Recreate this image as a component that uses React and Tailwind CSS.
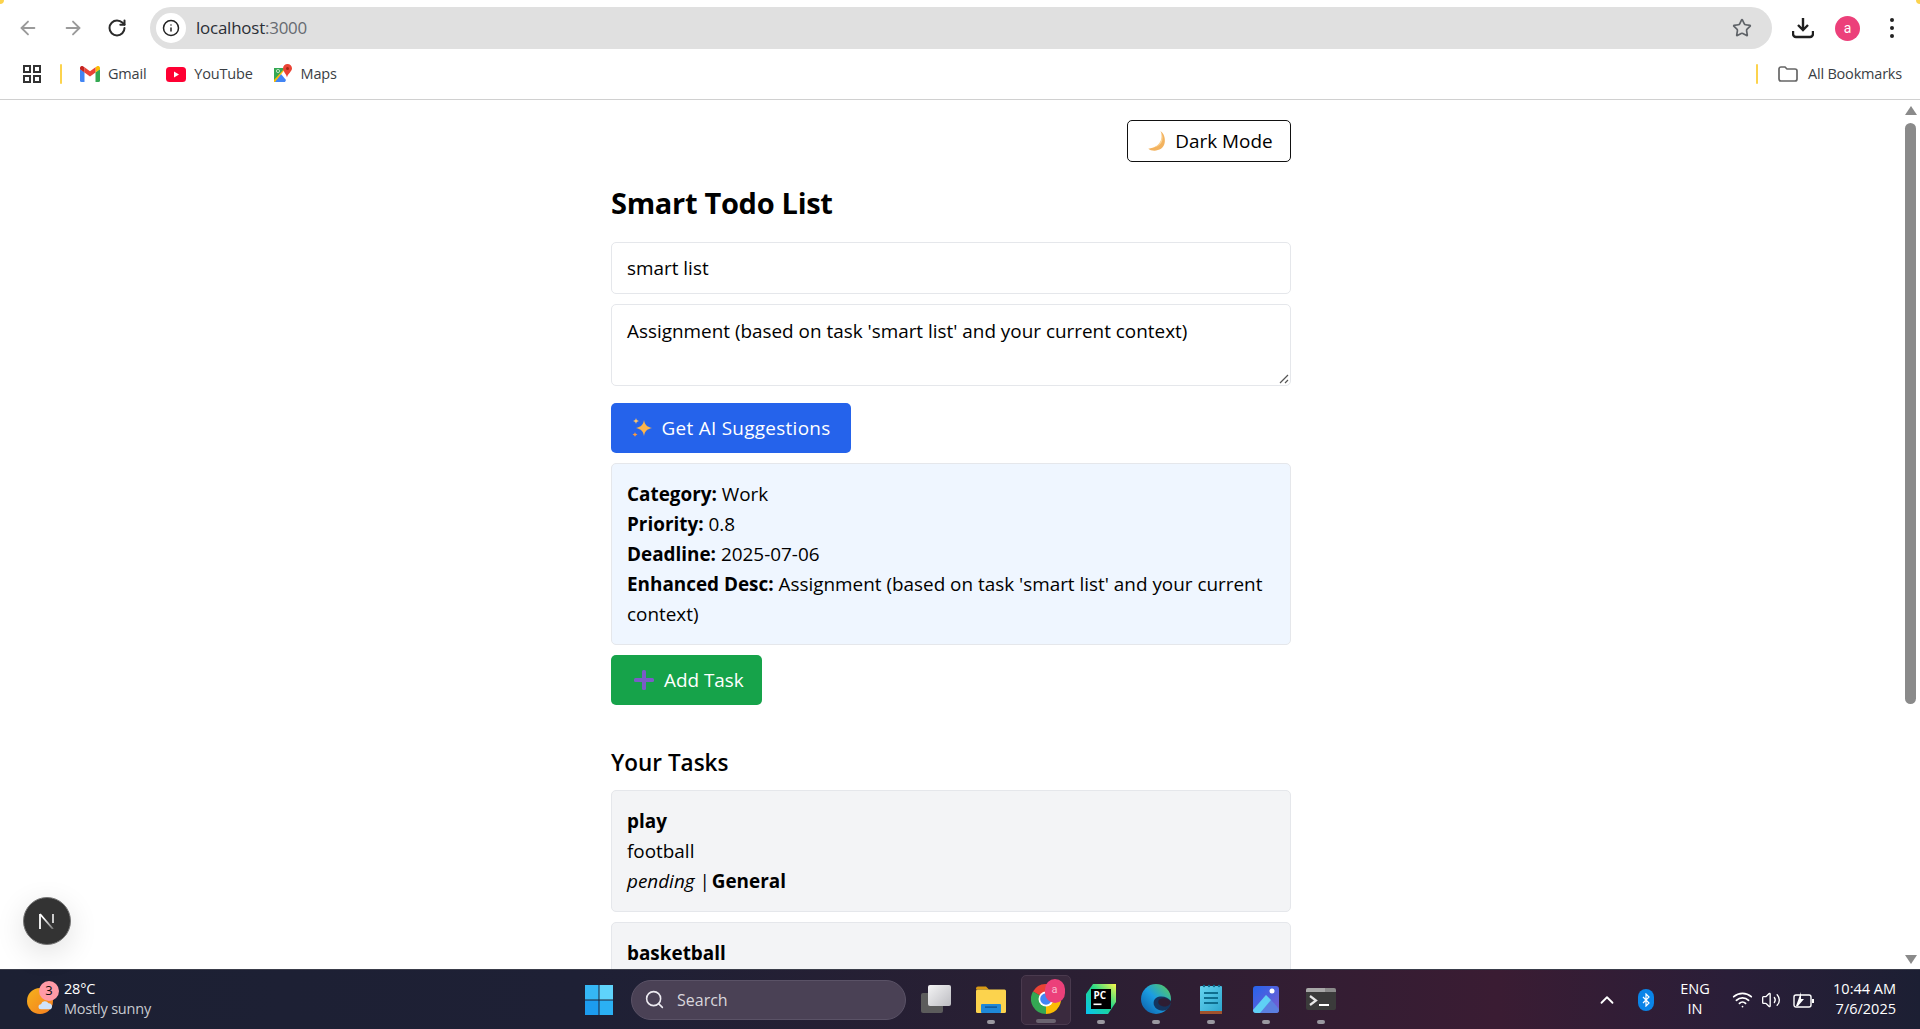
import React from "react";
import { ArrowLeft, ArrowRight, RotateCw, Star, Search, Info, ChevronUp, Volume2, Wifi } from "lucide-react";

const sans = "font-['Open_Sans','Noto_Sans',sans-serif]";

function GmailIcon() {
  return (
    <svg width="20" height="16" viewBox="0 0 20 16">
      <path d="M1.5 16A1.5 1.5 0 0 1 0 14.5V3l4.5 3.3V16z" fill="#4285f4" />
      <path d="M15.5 16V6.3L20 3v11.5a1.5 1.5 0 0 1-1.5 1.5z" fill="#34a853" />
      <path d="M15.5 1.2V6.500L20 3.200V2c0-1.700-2-2.700-3.300-1.600z" fill="#fbbc04" />
      <path d="M4.500 6.500V1.200L10 5.300l5.500-4.100v5.300L10 10.500z" fill="#ea4335" />
      <path d="M0 2v1.200L4.500 6.500V1.200L3.300.4C2 -.7 0 .3 0 2z" fill="#c5221f" />
    </svg>
  );
}

function YouTubeIcon() {
  return (
    <svg width="20" height="15" viewBox="0 0 20 15">
      <rect width="20" height="15" rx="3.500" fill="#ff0033" />
      <path d="M8 4.500v6l5-3z" fill="#fff" />
    </svg>
  );
}

function MapsIcon() {
  return (
    <svg width="20" height="20" viewBox="0 0 20 20">
      <path d="M1 4h11L1 18z" fill="#34a853" />
      <path d="M1 18 8 10l5 6-1 2H2z" fill="#4285f4" />
      <path d="M1 16 12 4h1L2 18H1z" fill="#fbbc04" />
      <circle cx="5" cy="7" r="1.600" fill="none" stroke="#d7efd8" strokeWidth="0.800" />
      <path d="M14.500 0a4.500 4.500 0 0 0-4.500 4.500c0 3 3.200 5 4 9 .8-4 5-6 5-9A4.500 4.500 0 0 0 14.500 0z" fill="#ea4335" />
      <circle cx="14.500" cy="4.500" r="1.500" fill="#a52714" />
    </svg>
  );
}

function Bookmark({ icon, label, className }) {
  return (
    <div className={"flex items-center gap-[8px] " + (className || "")}>
      {icon}
      <span className={sans + " text-[14.500px] tracking-[-0.2px] text-[#3a3e44]"}>{label}</span>
    </div>
  );
}

function ChromeBars() {
  return (
    <div className="relative h-[100px] shrink-0 bg-white border-b border-[#d0d0d0]">
      <div className="absolute left-0 top-0 w-[4px] h-[4px] rounded-br-full bg-[#fcd34d]" />
      <div className="absolute right-0 top-0 w-[4px] h-[4px] rounded-bl-full bg-[#fcd34d]" />
      <div className="flex items-center h-[56px] pl-[17px]">
        <ArrowLeft size={22} strokeWidth={2} className="text-[#9a9a9a]" />
        <ArrowRight size={22} strokeWidth={2} className="text-[#9a9a9a] ml-[23px]" />
        <RotateCw size={20} strokeWidth={2.400} className="text-[#2a2a2a] ml-[23px]" />
        <div className="ml-[23px] w-[1622px] h-[42px] rounded-full bg-[#e0e0e0] flex items-center pl-[6px] pr-[20px]">
          <div className="w-[30px] h-[30px] rounded-full bg-white flex items-center justify-center">
            <Info size={18} strokeWidth={2} className="text-[#222]" />
          </div>
          <span className={sans + " ml-[10px] text-[16.900px] tracking-[-0.2px] text-[#2b2f36]"}>
            localhost<span className="text-[#666a70]">:3000</span>
          </span>
          <Star size={20} strokeWidth={2} className="ml-auto text-[#5f6368]" />
        </div>
        <svg width="22" height="22" viewBox="0 0 22 22" className="ml-[20px]">
          <path d="M11 1v12M6 8l5 5 5-5M1 14v3a3 3 0 0 0 3 3h14a3 3 0 0 0 3-3v-3" fill="none" stroke="#1f1f1f" strokeWidth="2.400" />
        </svg>
        <div className="ml-[21px] w-[25px] h-[25px] rounded-full bg-[#ec407a] flex items-center justify-center text-white text-[14px] font-['Roboto']">a</div>
        <div className="ml-[30px] flex flex-col gap-[4px]">
          <span className="w-[4px] h-[4px] rounded-full bg-[#222]" />
          <span className="w-[4px] h-[4px] rounded-full bg-[#222]" />
          <span className="w-[4px] h-[4px] rounded-full bg-[#222]" />
        </div>
      </div>
      <div className="flex items-center h-[36px] pl-[23px] pr-[18px]">
        <svg width="18" height="18" viewBox="0 0 18 18" fill="none" stroke="#333" strokeWidth="2">
          <rect x="1" y="1" width="6" height="6" />
          <rect x="11" y="1" width="6" height="6" />
          <rect x="1" y="11" width="6" height="6" />
          <rect x="11" y="11" width="6" height="6" />
        </svg>
        <div className="ml-[19px] w-[2px] h-[20px] rounded-full bg-[#fcd34d]" />
        <Bookmark className="ml-[18px]" icon={<GmailIcon />} label="Gmail" />
        <Bookmark className="ml-[20px]" icon={<YouTubeIcon />} label="YouTube" />
        <Bookmark className="ml-[20px]" icon={<MapsIcon />} label="Maps" />
        <div className="ml-auto w-[2px] h-[20px] rounded-full bg-[#fcd34d]" />
        <svg width="20" height="16" viewBox="0 0 20 16" fill="none" stroke="#666" strokeWidth="1.700" className="ml-[20px]">
          <path d="M1 3a2 2 0 0 1 2-2h4l2 2h8a2 2 0 0 1 2 2v8a2 2 0 0 1-2 2H3a2 2 0 0 1-2-2z" />
        </svg>
        <span className={sans + " ml-[10px] text-[14.500px] tracking-[-0.2px] text-[#3a3e44]"}>All Bookmarks</span>
      </div>
    </div>
  );
}

function Moon() {
  return (
    <svg width="22" height="22" viewBox="0 0 20 20">
      <path d="M14 1c3 5 1 15-11 16 3 3 14 3 15-6 .5-4-1-8-4-10z" fill="#f3b35f" />
      <path d="M14 1c3 5 1 15-11 16 5-1 13-2 13-10 0-2-1-4-2-6z" fill="#fcd79b" />
    </svg>
  );
}

function Sparkles() {
  return (
    <svg width="22" height="22" viewBox="0 0 22 22">
      <path d="M13 3c1 5 2.500 6.500 8 8-5.500 1.500-7 3-8 8-1-5-2.500-6.500-8-8 5.500-1.500 7-3 8-8z" fill="#fdb44b" />
      <path d="M5 1c.5 2 1 2.500 3 3-2 .5-2.500 1-3 3-.5-2-1-2.500-3-3 2-.5 2.500-1 3-3z" fill="#fcc46b" />
      <path d="M4 15c.4 1.500.8 2 2.500 2.500-1.700.5-2.100 1-2.500 2.500-.4-1.500-.8-2-2.500-2.500 1.700-.5 2.100-1 2.500-2.500z" fill="#fd9a3c" />
    </svg>
  );
}

function Plus() {
  return (
    <svg width="20" height="20" viewBox="0 0 20 20">
      <rect x="8" y="0" width="4" height="20" rx="1.500" fill="#7a5cc6" />
      <rect x="0" y="8" width="20" height="4" rx="1.500" fill="#7a5cc6" />
    </svg>
  );
}

function TaskCard({ title, desc, status, category }) {
  return (
    <div className="shrink-0 rounded-[5px] border border-[#e5e7eb] bg-[#f3f4f6] p-[15px]">
      <div className="font-bold">{title}</div>
      <div>{desc}</div>
      <div>
        <em className="italic">{status}</em> | <strong className="-ml-[3px]">{category}</strong>
      </div>
    </div>
  );
}

function MainPage() {
  return (
    <div className="flex-1 flex min-h-0 bg-white">
      <div className={sans + " flex-1 min-w-0 overflow-hidden"}>
        <div className="w-[680px] ml-[611px] flex flex-col text-black text-[18.900px] leading-[30px]">
          <button className="self-end mt-[20px] h-[42px] w-[164px] rounded-[5px] border border-[#111] bg-white flex items-center justify-center gap-[8px]">
            <Moon />
            <span>Dark Mode</span>
          </button>
          <h1 className="mt-[21px] text-[29px] leading-[40px] font-bold tracking-[-0.3px]">Smart Todo List</h1>
          <div className="mt-[19px] h-[52px] rounded-[5px] border border-[#e5e7eb] bg-white flex items-center px-[15px]">smart list</div>
          <div className="relative mt-[10px] h-[82px] rounded-[5px] border border-[#e5e7eb] bg-white px-[15px] py-[11px]">
            Assignment (based on task 'smart list' and your current context)
            <svg width="10" height="10" viewBox="0 0 10 10" className="absolute right-[1px] bottom-[1px]" stroke="#555" strokeWidth="1.200">
              <path d="M1 9 9 1M6 9l3-3" />
            </svg>
          </div>
          <button className="mt-[17px] self-start h-[50px] w-[240px] rounded-[5px] bg-[#2563eb] text-white flex items-center justify-center gap-[8px]">
            <Sparkles />
            <span className="tracking-[0.3px]">Get AI Suggestions</span>
          </button>
          <div className="mt-[10px] rounded-[5px] border border-[#e5e7eb] bg-[#eff6ff] px-[15px] py-[15px]">
            <div><strong>Category:</strong> Work</div>
            <div><strong>Priority:</strong> 0.8</div>
            <div><strong>Deadline:</strong> 2025-07-06</div>
            <div><strong>Enhanced Desc:</strong> Assignment (based on task 'smart list' and your current context)</div>
          </div>
          <button className="mt-[10px] self-start h-[50px] w-[151px] rounded-[5px] bg-[#16a34a] text-white flex items-center pl-[23px] gap-[10px]">
            <Plus />
            <span>Add Task</span>
          </button>
          <h2 className="mt-[40px] text-[22.500px] leading-[35px] font-semibold">Your Tasks</h2>
          <div className="mt-[10px] flex flex-col gap-[10px]">
            <TaskCard title="play" desc="football" status="pending" category="General" />
            <TaskCard title="basketball" desc="court" status="pending" category="General" />
          </div>
        </div>
      </div>
      <div className="w-[15px] shrink-0 bg-white flex flex-col items-center pt-[6px] pb-[5px] pr-[4px]">
        <div className="w-0 h-0 border-x-[6px] border-x-transparent border-b-[9px] border-b-[#8a8a8a]" />
        <div className="mt-[8px] w-[11px] h-[581px] rounded-full bg-[#8a8a8a]" />
        <div className="mt-auto w-0 h-0 border-x-[6px] border-x-transparent border-t-[9px] border-t-[#8a8a8a]" />
      </div>
    </div>
  );
}

function TaskIcon({ children, dot = true, active = false, badge }) {
  return (
    <div className={"relative w-[50px] h-[50px] flex items-center justify-center rounded-[5px] mx-[2.500px] " + (active ? "bg-[#3a2a3e] border border-[#4a3a4e]" : "")}>
      <div className="-mt-[1px] flex">{children}</div>
      {badge}
      {dot && <span className={"absolute bottom-[1px] left-1/2 -translate-x-1/2 h-[4px] rounded-full " + (active ? "w-[20px] bg-[#6b6470]" : "w-[8px] bg-[#9a98a0]")} />}
    </div>
  );
}

function Taskbar() {
  return (
    <div className="relative h-[60px] shrink-0 flex items-center bg-[linear-gradient(90deg,#1c2033_0%,#1e2035_30%,#2a1f33_55%,#3a1c33_78%,#2a1e38_90%,#1c1f33_100%)] border-t border-[#3a3d4a] text-white">
      <div className="flex items-center pl-[27px] w-[585px] shrink-0">
        <div className="relative w-[26px] h-[26px] mt-[2px]">
          <div className="absolute left-0 top-0 w-[26px] h-[26px] rounded-full bg-[linear-gradient(135deg,#f5b31c,#f57c20)]" />
          <svg width="18" height="10" viewBox="0 0 20 12" className="absolute left-[10px] top-[12px]">
            <path d="M4 11a3 3 0 0 1 0-6 5 5 0 0 1 9-1 4 4 0 0 1 3 7z" fill="#cfe3fa" />
          </svg>
          <div className="absolute left-[12px] -top-[7px] w-[20px] h-[20px] rounded-full bg-[#ff9aa6] text-[#111] text-[13px] font-['Noto_Sans'] flex items-center justify-center">3</div>
        </div>
        <div className={sans + " ml-[11px] -mt-[2px] flex flex-col text-[14.500px] leading-[20px] tracking-[-0.2px]"}>
          <span>28°C</span>
          <span className="text-[#c8cad0]">Mostly sunny</span>
        </div>
      </div>
      <svg width="28" height="30" viewBox="0 0 28 30">
        <rect x="0" y="0" width="13.500" height="14.500" fill="#35b7f5" />
        <rect x="14.500" y="0" width="13.500" height="14.500" fill="#5fd3fb" />
        <rect x="0" y="15.500" width="13.500" height="14.500" fill="#1c9cef" />
        <rect x="14.500" y="15.500" width="13.500" height="14.500" fill="#2bb0f3" />
      </svg>
      <div className="ml-[18px] w-[275px] h-[40px] rounded-full bg-[#4a4155] border border-[#5a5266] flex items-center pl-[12px] gap-[12px]">
        <Search size={21} strokeWidth={1.800} className="text-[#eceaf0]" />
        <span className={sans + " text-[16px] text-[#d8d6dc]"}>Search</span>
      </div>
      <div className="ml-[2px] flex items-center">
        <TaskIcon dot={false}>
          <div className="relative w-[30px] h-[28px]">
            <div className="absolute left-0 bottom-0 w-[22px] h-[20px] rounded-[2px] bg-[#5c5c5c]" />
            <div className="absolute right-0 top-0 w-[23px] h-[21px] rounded-[2px] bg-[linear-gradient(135deg,#f4f4f5,#bdbdc2)]" />
          </div>
        </TaskIcon>
        <TaskIcon>
          <svg width="30" height="27" viewBox="0 0 30 27">
            <path d="M0 2.500a2 2 0 0 1 2-2h8l3 3h-13z" fill="#d99a14" />
            <rect y="3.500" width="30" height="23.500" rx="1.500" fill="#fcd34d" />
            <rect x="5" y="18" width="20" height="9" rx="1" fill="#1e88d8" />
            <rect x="9" y="20.500" width="12" height="1.200" fill="#0b4a86" />
          </svg>
        </TaskIcon>
        <TaskIcon active badge={<div className="absolute right-[5px] top-[3px] w-[20px] h-[24px] rounded-full bg-[#ec407a] text-[#f8bbd0] text-[11px] font-['Roboto'] flex items-center justify-center">a</div>}>
          <svg width="30" height="30" viewBox="0 0 30 30">
            <path d="M15 15 28 7.500A15 15 0 0 0 2 7.500z" fill="#ea4335" />
            <path d="M15 15 2 7.500A15 15 0 0 0 15 30z" fill="#34a853" />
            <path d="M15 15 15 30A15 15 0 0 0 28 7.500z" fill="#fbbc04" />
            <circle cx="15" cy="15" r="7.500" fill="#fff" />
            <circle cx="15" cy="15" r="5.800" fill="#4285f4" />
          </svg>
        </TaskIcon>
        <TaskIcon>
          <svg width="30" height="30" viewBox="0 0 30 30">
            <defs>
              <linearGradient id="pcGrad" x1="0" y1="1" x2="1" y2="0">
                <stop offset="0" stopColor="#07c3f2" />
                <stop offset="0.550" stopColor="#21d789" />
                <stop offset="1" stopColor="#fcf84a" />
              </linearGradient>
            </defs>
            <path d="M7 0h23v18l-8 12H0V10z" fill="url(#pcGrad)" />
            <rect x="5" y="5" width="20" height="20" fill="#000" />
            <text x="7.500" y="15" fill="#fff" fontSize="10" fontWeight="700" fontFamily="Open Sans, sans-serif">PC</text>
            <rect x="7.500" y="19.500" width="8" height="1.600" fill="#fff" />
          </svg>
        </TaskIcon>
        <TaskIcon>
          <svg width="30" height="30" viewBox="0 0 30 30">
            <defs>
              <linearGradient id="edgeGrad" x1="0" y1="1" x2="1" y2="0">
                <stop offset="0" stopColor="#0c59a4" />
                <stop offset="0.500" stopColor="#1b9de2" />
                <stop offset="1" stopColor="#5ed04e" />
              </linearGradient>
            </defs>
            <circle cx="15" cy="15" r="15" fill="url(#edgeGrad)" />
            <path d="M30 17c-3-4-10-6-15-3-4 3-3 10 3 12 3 1 6 1 9-1 2-2 3-5 3-8z" fill="#14355f" />
            <path d="M30 18c-2-3-7-5-11-3-3 2-2 6 2 7 3 1 5 .5 7-1 1-1 2-2 2-3z" fill="#2e1d33" />
          </svg>
        </TaskIcon>
        <TaskIcon>
          <svg width="22" height="30" viewBox="0 0 22 30">
            <defs>
              <linearGradient id="noteGrad" x1="0" y1="0" x2="1" y2="1">
                <stop offset="0" stopColor="#66d4f0" />
                <stop offset="1" stopColor="#2aa3cc" />
              </linearGradient>
            </defs>
            <rect y="2" width="22" height="28" rx="1" fill="url(#noteGrad)" />
            <rect y="27" width="22" height="3" fill="#a0522d" />
            <circle cx="4" cy="2" r="1.200" fill="#0f6e8f" />
            <circle cx="9" cy="2" r="1.200" fill="#0f6e8f" />
            <circle cx="14" cy="2" r="1.200" fill="#0f6e8f" />
            <circle cx="19" cy="2" r="1.200" fill="#0f6e8f" />
            <rect x="4" y="8" width="14" height="2" fill="#0f6e8f" />
            <rect x="4" y="13" width="14" height="2" fill="#0f6e8f" />
            <rect x="4" y="18" width="14" height="2" fill="#0f6e8f" />
          </svg>
        </TaskIcon>
        <TaskIcon>
          <svg width="26" height="27" viewBox="0 0 26 27">
            <defs>
              <linearGradient id="photoGrad" x1="0" y1="0" x2="1" y2="1">
                <stop offset="0" stopColor="#2563eb" />
                <stop offset="1" stopColor="#7c5fd0" />
              </linearGradient>
            </defs>
            <rect width="26" height="27" rx="3" fill="url(#photoGrad)" />
            <path d="M0 24 13 9c4 4 9 9 13 14v1a3 3 0 0 1-3 3H3z" fill="#5b7fe0" />
            <path d="M0 24 13 9l5 5L7 27H3a3 3 0 0 1-3-3z" fill="#5fd0f5" />
            <circle cx="19" cy="5" r="2.500" fill="#fff" />
          </svg>
        </TaskIcon>
        <TaskIcon>
          <svg width="30" height="22" viewBox="0 0 30 22">
            <rect width="30" height="22" rx="2" fill="#3b3b3b" />
            <path d="M0 2a2 2 0 0 1 2-2h17v4H0z" fill="#a8a8a8" />
            <path d="M19 0h9a2 2 0 0 1 2 2v2H19z" fill="#8a8a8a" />
            <path d="M4 8l6 4.500-6 4.500" stroke="#e8e8e8" strokeWidth="2.200" fill="none" />
            <rect x="13" y="16" width="10" height="2" fill="#fff" />
          </svg>
        </TaskIcon>
      </div>
      <div className="ml-auto flex items-center pr-[24px]">
        <ChevronUp size={22} strokeWidth={2} className="text-white" />
        <div className="ml-[20px] w-[16px] h-[22px] rounded-full bg-[#0a84e8] flex items-center justify-center">
          <svg width="8" height="14" viewBox="0 0 8 14" fill="none" stroke="#fff" strokeWidth="1.200">
            <path d="M1 4l6 6-3 3V1l3 3-6 6" />
          </svg>
        </div>
        <div className={sans + " ml-[19px] w-[44px] -mt-[2px] flex flex-col items-center text-[14.500px] leading-[20px]"}>
          <span>ENG</span>
          <span>IN</span>
        </div>
        <Wifi size={21} strokeWidth={2} className="ml-[15px] text-white" />
        <Volume2 size={20} strokeWidth={1.600} className="ml-[8px] text-white" />
        <svg width="22" height="18" viewBox="0 0 22 18" className="ml-[12px]">
          <rect x="1" y="4" width="17" height="12" rx="2" fill="none" stroke="#fff" strokeWidth="1.400" />
          <rect x="19" y="8" width="2" height="4" fill="#fff" />
          <path d="M3 15 8 1v7h3l-6 7z" fill="#fff" />
        </svg>
        <div className={sans + " ml-[18px] -mt-[2px] flex flex-col items-end text-[14.500px] leading-[20px]"}>
          <span>10:44 AM</span>
          <span>7/6/2025</span>
        </div>
      </div>
    </div>
  );
}

export default function App() {
  return (
    <div className="relative h-screen w-full flex flex-col overflow-hidden bg-white">
      <ChromeBars />
      <MainPage />
      <Taskbar />
      <div className="absolute left-[23px] bottom-[84px] w-[48px] h-[48px] rounded-full bg-[#333] border border-[#777] shadow-[0_8px_30px_rgba(0,0,0,0.12)] flex items-center justify-center">
        <svg width="16" height="16" viewBox="0 0 16 16" fill="none" strokeWidth="1.800">
          <defs>
            <linearGradient id="nFade" x1="0" y1="0" x2="1" y2="1">
              <stop offset="0.300" stopColor="#fff" />
              <stop offset="1" stopColor="#fff" stopOpacity="0.300" />
            </linearGradient>
          </defs>
          <path d="M1 16V1" stroke="#fff" />
          <path d="M1 1l13 15" stroke="url(#nFade)" />
          <path d="M14 1v9" stroke="#ddd" />
        </svg>
      </div>
    </div>
  );
}
